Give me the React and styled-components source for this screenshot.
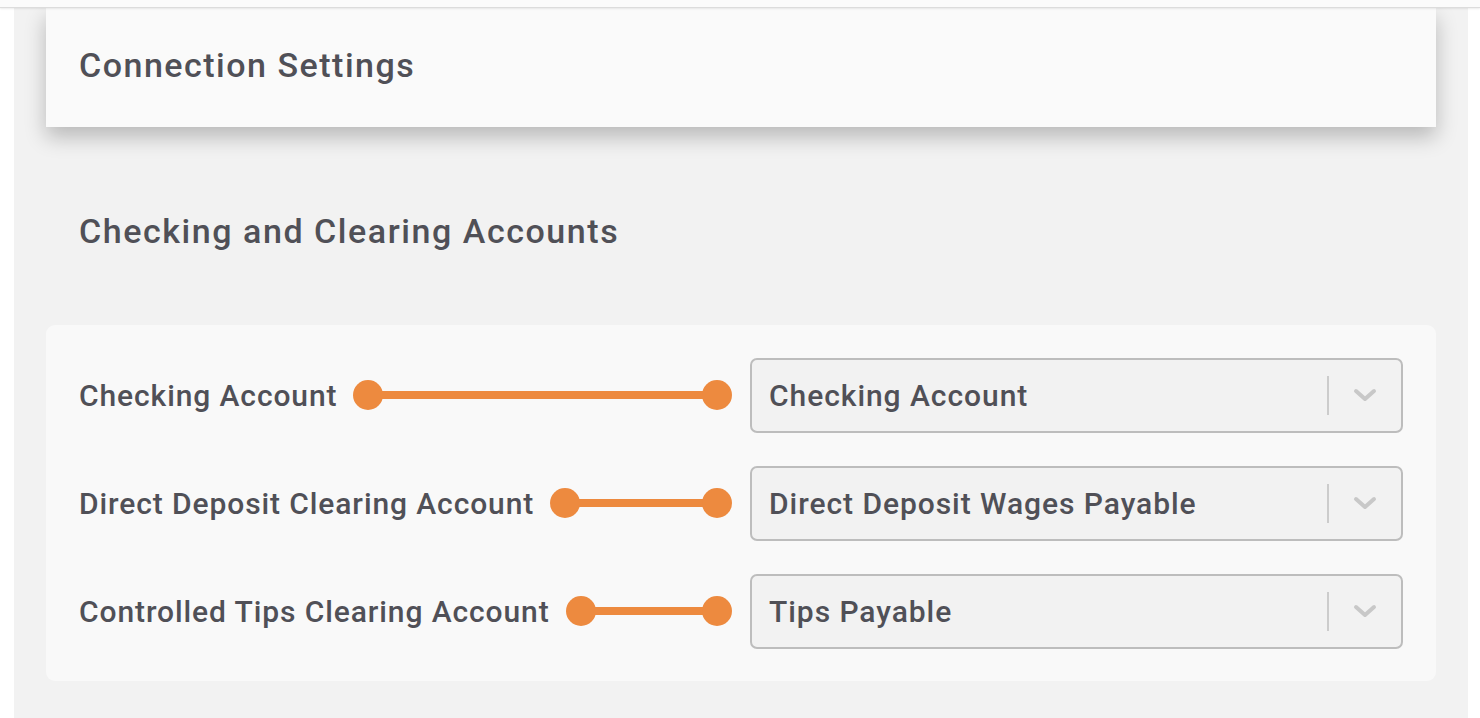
import styled, { createGlobalStyle } from "styled-components";

const GlobalStyle = createGlobalStyle`
    html, body {
        margin: 0;
        padding: 0;
        background: #ffffff;
        font-family: "Roboto", "Liberation Sans", sans-serif;
    }
`;

const accounts = [
    { label: "Checking Account", value: "Checking Account" },
    { label: "Direct Deposit Clearing Account", value: "Direct Deposit Wages Payable" },
    { label: "Controlled Tips Clearing Account", value: "Tips Payable" },
];

const App = () => {
    return (
        <>
            <GlobalStyle />
            <TopBar />
            <Panel>
                <HeaderCard>
                    <CardTitle>Connection Settings</CardTitle>
                </HeaderCard>
                <SectionTitle>Checking and Clearing Accounts</SectionTitle>
                <MappingCard>
                    {accounts.map((item) => (
                        <Row key={item.label}>
                            <Label>{item.label}</Label>
                            <Connector>
                                <Dot />
                                <Bar />
                                <Dot />
                            </Connector>
                            <Select>
                                <SelectValue>{item.value}</SelectValue>
                                <Separator />
                                <Chevron width="24" height="14" viewBox="0 0 24 14">
                                    <polyline points="3,3 12,11 21,3" />
                                </Chevron>
                            </Select>
                        </Row>
                    ))}
                </MappingCard>
            </Panel>
        </>
    );
};

const TopBar = styled.div`
    position: relative;
    z-index: 2;
    height: 7px;
    background: #fbfbfb;
    border-bottom: 1px solid #dcdcdc;
    box-shadow: 0 1px 2px rgba(0, 0, 0, 0.08);
`;

const Panel = styled.div`
    margin: 0 12px 0 14px;
    background: #f2f2f2;
    padding: 0 32px 36px;
    min-height: 710px;
    box-sizing: border-box;
`;

const HeaderCard = styled.div`
    position: relative;
    z-index: 1;
    height: 119px;
    background: #fafafa;
    display: flex;
    align-items: center;
    padding: 0 33px 6px;
    box-sizing: border-box;
    box-shadow: 0 10px 20px rgba(0, 0, 0, 0.24);
`;

const CardTitle = styled.h2`
    margin: 0;
    font-size: 34px;
    font-weight: 500;
    letter-spacing: 1.5px;
    color: #505057;
`;

const SectionTitle = styled.h3`
    margin: 0;
    height: 198px;
    display: flex;
    align-items: center;
    padding: 10px 33px 0;
    box-sizing: border-box;
    font-size: 34px;
    font-weight: 500;
    letter-spacing: 1.55px;
    color: #505057;
`;

const MappingCard = styled.div`
    background: #f9f9f9;
    border-radius: 9px;
    padding: 33px 33px;
    display: flex;
    flex-direction: column;
    gap: 34px;
`;

const Row = styled.div`
    display: flex;
    align-items: center;
    height: 74px;
`;

const Label = styled.span`
    font-size: 30px;
    font-weight: 500;
    letter-spacing: 0.9px;
    color: #505057;
    white-space: nowrap;
    margin-right: 16px;
`;

const Connector = styled.div`
    flex: 1;
    display: flex;
    align-items: center;
    margin-right: 18px;
`;

const Dot = styled.span`
    width: 30px;
    height: 30px;
    border-radius: 50%;
    background: #ed8a3f;
    flex-shrink: 0;
`;

const Bar = styled.span`
    flex: 1;
    height: 8px;
    margin: 0 -2px;
    background: #ed8a3f;
`;

const Select = styled.div`
    width: 653px;
    height: 75px;
    box-sizing: border-box;
    border: 2px solid #bdbdbd;
    border-radius: 7px;
    background: #f2f2f2;
    display: flex;
    align-items: center;
    padding: 0 24px 0 17px;
`;

const SelectValue = styled.span`
    flex: 1;
    font-size: 30px;
    font-weight: 500;
    letter-spacing: 0.95px;
    color: #505057;
`;

const Separator = styled.span`
    width: 2px;
    height: 39px;
    background: #cccccc;
    margin-right: 24px;
`;

const Chevron = styled.svg`
    fill: none;
    stroke: #c8c8c8;
    stroke-width: 4;
    stroke-linecap: round;
    stroke-linejoin: round;
`;

export default App;
